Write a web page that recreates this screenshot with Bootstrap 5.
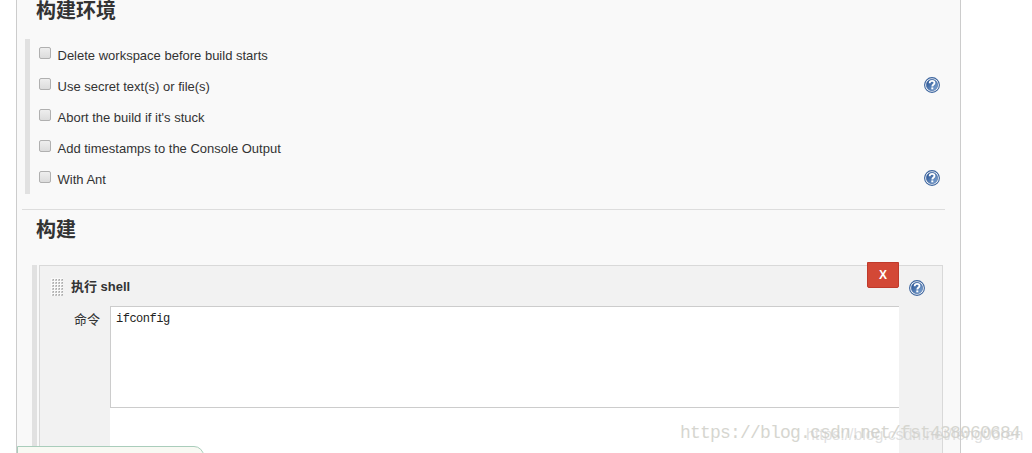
<!DOCTYPE html>
<html lang="zh-CN">
<head>
  <meta charset="UTF-8" />
  <meta name="viewport" content="width=device-width, initial-scale=1" />
  <title>构建环境</title>
  <link href="https://cdn.jsdelivr.net/npm/bootstrap@5.3.3/dist/css/bootstrap.min.css" rel="stylesheet" />
  <style>
    body {
      background-color: #fff;
      color: #333;
      font-family: "Liberation Sans", "Noto Sans CJK SC", sans-serif;
      font-size: 13px;
      line-height: 20px;
    }

    .page-view {
      height: 453px;
    }

    .config-panel {
      width: 945px;
      height: 453px;
      margin-left: 16px;
      padding: 0 15px 0 5px;
      background-color: #f9f9f9;
      border: solid #ccc;
      border-width: 0 1px;
    }

    .section-title {
      font-family: "Noto Sans CJK SC", sans-serif;
      font-size: 20px;
      font-weight: 700;
      line-height: 37px;
      height: 39px;
      padding-left: 14px;
    }

    .first-title {
      line-height: 20px;
    }

    .option-list {
      margin-left: 3px;
      border-left: 5px solid #e1e1e1;
      padding: 0 5px 0 9px;
      height: 155px;
    }

    .option-row {
      height: 31px;
    }

    .option-row label {
      line-height: 34px;
      margin-left: 6.5px;
      flex-grow: 1;
    }

    .option-row svg {
      margin-top: 7px;
    }

    .option-row .form-check-input {
      width: 12px;
      height: 12px;
      margin-top: 8px;
      border: 1px solid #b0b0b0;
      border-radius: 2px;
      background: linear-gradient(#eee, #dcdcdc);
    }

    .section-line {
      height: 1px;
      margin-top: 15px;
      background-color: #ddd;
    }

    .builder {
      margin: 16px 2px 0 10px;
      border-left: 5px solid #e1e1e1;
      padding-left: 2px;
      height: 188px;
    }

    .builder-box {
      background-color: #f2f2f2;
      border: 1px solid #d9d9d9;
      border-bottom: 0;
      height: 188px;
    }

    .builder-head {
      height: 40px;
    }

    .grip {
      width: 12px;
      height: 18px;
      margin: 12px 8px 0 11px;
    }

    .builder-name {
      font-weight: 700;
      margin-top: 11px;
    }

    .delete-btn {
      width: 32px;
      height: 26px;
      margin-top: -4px;
      border: 1px solid #c03a2b;
      border-radius: 0 0 2px 2px;
      background-color: #d34836;
      color: #fff;
      font-size: 12px;
      font-weight: 700;
      line-height: 24px;
    }

    .builder-help {
      margin: 14px 17px 0 10px;
    }

    .command-label {
      width: 60px;
      margin-right: 10px;
      margin-top: 4px;
    }

    .command-area {
      width: 789px;
      height: 147px;
      background-color: #fff;
    }

    .command-area textarea {
      display: block;
      width: 100%;
      height: 102px;
      padding: 3px 5px;
      border: 1px solid #ccc;
      border-right: 0;
      color: #222;
      font-family: "Liberation Mono", monospace;
      font-size: 12px;
      letter-spacing: -.5px;
      line-height: 18px;
      resize: none;
      outline: 0;
    }

    .save-bar {
      left: 17px;
      top: 446px;
      width: 187px;
      height: 20px;
      border: 1px solid #a9cdbb;
      border-radius: 0 10px 0 0;
      background-color: #f8f9f3;
    }

    .blog-mark {
      left: 680px;
      top: 423px;
      color: #d6d6d0;
      font-family: "Liberation Mono", monospace;
      font-size: 18px;
      letter-spacing: -.8px;
      line-height: 20px;
    }

    .author-mark {
      left: 806px;
      top: 425px;
      color: rgba(205, 205, 205, .6);
      font-size: 16px;
      letter-spacing: -.08px;
    }
  </style>
</head>
<body>
  <!-- Shared icons -->
  <svg class="position-absolute" width="0" height="0">
    <defs>
      <linearGradient id="helpFill" x1="0" y1="0" x2="1" y2="1">
        <stop offset="0" stop-color="#1f4a8c" />
        <stop offset="1" stop-color="#86acd8" />
      </linearGradient>
      <pattern id="dots" width="3" height="3" patternUnits="userSpaceOnUse">
        <rect width="3" height="3" fill="#fafafa" />
        <rect x="1" y="1" width="1" height="1" fill="#d0d0d0" />
        <rect x="2" y="1" width="1" height="1" fill="#aaa" />
        <rect x="1" y="2" width="2" height="1" fill="#c4c4c4" />
      </pattern>
    </defs>
    <symbol id="help" viewBox="0 0 16 16">
      <circle cx="8" cy="8" r="7.4" fill="#fff" stroke="#3b649e" stroke-width="1.1" />
      <circle cx="8" cy="8" r="5.7" fill="url(#helpFill)" stroke="#2c5797" stroke-width=".5" />
      <path d="M5.6 6.2C5.7 4.6 6.8 3.9 8.1 3.9C9.5 3.9 10.5 4.7 10.5 5.9C10.5 7.4 8.3 7.6 8.3 9.4" fill="none" stroke="#fff" stroke-width="1.8" />
      <rect x="7.3" y="10.4" width="2" height="1.9" fill="#fff" />
    </symbol>
  </svg>

  <div class="page-view position-relative overflow-hidden">
    <div class="config-panel">
      <div class="section-title first-title">构建环境</div>

      <div class="option-list">
        <div class="option-row d-flex">
          <input class="form-check-input" type="checkbox" id="cleanWs" />
          <label for="cleanWs">Delete workspace before build starts</label>
        </div>
        <div class="option-row d-flex">
          <input class="form-check-input" type="checkbox" id="secret" />
          <label for="secret">Use secret text(s) or file(s)</label>
          <svg width="16" height="16"><use href="#help" /></svg>
        </div>
        <div class="option-row d-flex">
          <input class="form-check-input" type="checkbox" id="abort" />
          <label for="abort">Abort the build if it's stuck</label>
        </div>
        <div class="option-row d-flex">
          <input class="form-check-input" type="checkbox" id="timestamps" />
          <label for="timestamps">Add timestamps to the Console Output</label>
        </div>
        <div class="option-row d-flex">
          <input class="form-check-input" type="checkbox" id="ant" />
          <label for="ant">With Ant</label>
          <svg width="16" height="16"><use href="#help" /></svg>
        </div>
      </div>

      <div class="section-line"></div>
      <div class="section-title">构建</div>

      <!-- Build step -->
      <div class="builder">
        <div class="builder-box">
          <div class="builder-head d-flex align-items-start">
            <svg class="grip"><rect width="12" height="18" fill="url(#dots)" /></svg>
            <div class="builder-name flex-grow-1">执行 shell</div>
            <button type="button" class="delete-btn p-0">X</button>
            <svg class="builder-help" width="16" height="16"><use href="#help" /></svg>
          </div>
          <div class="d-flex">
            <div class="command-label text-end">命令</div>
            <div class="command-area">
              <textarea spellcheck="false">ifconfig</textarea>
            </div>
          </div>
        </div>
      </div>
    </div>

    <div class="save-bar position-absolute"></div>
    <div class="blog-mark position-absolute text-nowrap">https://blog.csdn.net/fst438060684</div>
    <div class="author-mark position-absolute text-nowrap">https://blog.csdn.net/feng06ren</div>
  </div>

  <script src="https://cdn.jsdelivr.net/npm/bootstrap@5.3.3/dist/js/bootstrap.bundle.min.js"></script>
</body>
</html>
